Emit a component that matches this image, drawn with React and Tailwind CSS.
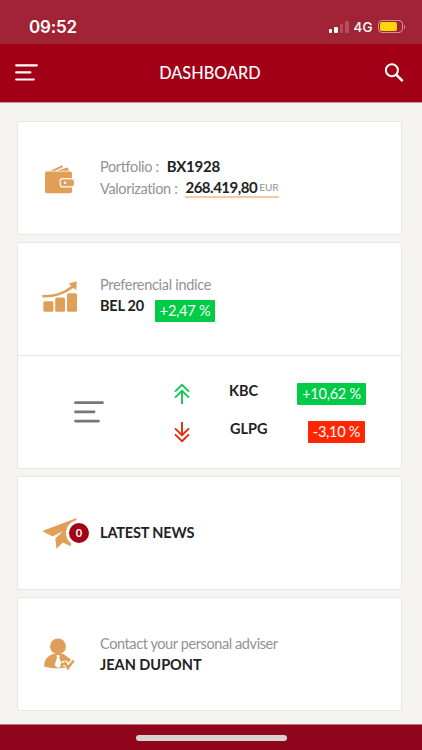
const fontFamily = "font-['Lato','Open_Sans',sans-serif]";

function MenuIcon({ className }) {
  return (
    <svg viewBox="0 0 30 22" className={className} stroke="currentColor" strokeWidth="2.8" strokeLinecap="round">
      <path d="M1.5 1.7H28.5M1.5 10.9H20M1.5 20.1H24.5" />
    </svg>
  );
}

function SearchIcon() {
  return (
    <svg viewBox="0 0 20 20" className="h-5 w-5" fill="none" stroke="white">
      <circle cx="7.9" cy="7.3" r="6" strokeWidth="2" />
      <path d="M12.2 11.6L18.7 18.1" strokeWidth="2.5" />
    </svg>
  );
}

function WalletIcon() {
  return (
    <svg viewBox="0 0 36 36" className="mb-[2px] h-9 w-9" fill="#e09f58">
      <path d="M8.5 11.7L19.6 6.4Q20.4 6.1 20.8 6.9L21 7.9L13 11.7Z" />
      <path d="M15 11.8L25 8.5Q25.8 8.3 26.1 9.1L26.8 11.8Z" />
      <rect x="3" y="12.6" width="27" height="21.6" rx="1.8" />
      <rect x="18.2" y="19.6" width="14.2" height="8.3" rx="2.5" stroke="white" strokeWidth="1.2" />
      <circle cx="23" cy="23.7" r="1.2" fill="white" />
    </svg>
  );
}

function ChartIcon() {
  return (
    <svg viewBox="0 0 36 36" className="mb-[6px] h-9 w-9" fill="#e09f58">
      <rect x="1.4" y="23.2" width="10" height="10.6" rx="1.6" />
      <rect x="13.2" y="19.4" width="9.8" height="14.4" rx="1.6" />
      <rect x="25" y="15.2" width="10" height="18.6" rx="1.6" />
      <path d="M0.4 16.8Q17 18.1 29.4 7.8L26.7 5.4L34.7 3.2L34.3 12.1L31.2 9.9Q18 20 0.4 19.4Z" />
    </svg>
  );
}

function PlaneIcon() {
  return (
    <svg viewBox="0 0 36 36" className="h-9 w-9" fill="#e09f58">
      <path d="M0.2 15.9L34.8 2.9L28.6 31.2L20.8 27.6L14.4 33.8L13.4 23.4L20.8 16.2L10.6 21.6Z" />
    </svg>
  );
}

function AdviserIcon() {
  return (
    <svg viewBox="0 0 36 36" className="mb-[2px] h-9 w-9" fill="#e09f58">
      <ellipse cx="16" cy="11.4" rx="7.9" ry="8" />
      <path d="M10.5 19H21.5L29 24.5V31Q23 33.4 16 33.4Q9 33.4 2 31.5Q2 22.5 10.5 19Z" />
      <path d="M14.6 20H17.6L17.3 22.7L19.8 30L16.2 33.6L12.6 30L15 22.7Z" fill="white" />
      <path d="M20 29L23.5 28.2L26.2 32L31.8 25" fill="none" stroke="white" strokeWidth="5" />
      <path d="M18.8 30.4L23.2 28L26 33L31.6 25.4" fill="none" stroke="#e09f58" strokeWidth="2.6" />
    </svg>
  );
}

function TrendIcon({ className }) {
  return (
    <svg viewBox="0 0 16 22" className={className} fill="none" stroke="currentColor" strokeWidth="1.9">
      <path d="M1 8.6L8 1.8L15 8.6M1 14.6L8 7.8L15 14.6M8 7.8V21" />
    </svg>
  );
}

function StatusBar() {
  return (
    <div className="flex h-11 items-center justify-between bg-[#a02435] pt-[9px] pr-[17px] pl-[29px] text-white">
      <span className="font-['Inter',sans-serif] text-[17px] leading-5 font-semibold tracking-[-0.2px]">09:52</span>
      <div className="flex items-center">
        <div className="mr-[5px] flex h-3 items-end gap-[2px]">
          <span className="h-1 w-[3.5px] rounded-[1px] bg-white" />
          <span className="h-[6px] w-[3.5px] rounded-[1px] bg-white" />
          <span className="h-[9px] w-[3.5px] rounded-[1px] bg-white/20" />
          <span className="h-3 w-[3.5px] rounded-[1px] bg-white/20" />
        </div>
        <span className="mr-[5px] font-['Inter',sans-serif] text-[13.5px] leading-4 font-medium">4G</span>
        <div className="h-[13px] w-[25px] rounded-[4px] border border-white/50 p-[1px]">
          <div className="h-full w-[17px] rounded-[2px] bg-[#ffd60a]" />
        </div>
        <span className="ml-[1px] h-1 w-[1.5px] rounded-r bg-white/50" />
      </div>
    </div>
  );
}

function Card({ children, className = '' }) {
  return (
    <section className={`rounded-[2px] border border-[#e7e6e0] bg-white ${className}`}>{children}</section>
  );
}

function Rate({ children, className }) {
  return (
    <span className={`flex h-[22px] items-center justify-center rounded-[1px] text-[14.5px] tracking-[-0.25px] text-white ${className}`}>
      {children}
    </span>
  );
}

export default function App() {
  return (
    <div className={`flex h-[750px] w-[422px] flex-col overflow-hidden bg-[#f5f4f0] text-[#222] [font-variant-ligatures:none] ${fontFamily}`}>
      <StatusBar />
      <header className="flex h-[58px] items-center justify-between bg-[#a20016] pr-[18px] pb-px pl-[15px] text-white">
        <MenuIcon className="h-[17px] w-[23px]" />
        <h1 className="mr-[2px] text-[16.3px] leading-5 font-medium">DASHBOARD</h1>
        <SearchIcon />
      </header>

      <main className="flex flex-1 flex-col gap-[7px] border-t border-[#dc8e99] pt-[18px] pr-5 pl-[17px]">
        <Card className="flex h-[114px] items-center pl-6">
          <WalletIcon />
          <div className="ml-[22px] text-[14.5px] leading-[22px] tracking-[-0.35px] text-[#929292]">
            <p className="flex h-[22px]">
              <span>Portfolio :</span>
              <b className="-mt-px ml-2 text-[15px] tracking-[-0.2px] text-[#222]">BX1928</b>
            </p>
            <p className="flex h-[22px]">
              <span>Valorization :</span>
              <span className="ml-2 flex h-[20px] items-center border-b-2 border-[#f3caa5]">
                <b className="text-[15px] tracking-[-0.5px] text-[#222]">268.419,80</b>
                <span className="ml-[2px] text-[10px] tracking-normal">EUR</span>
              </span>
            </p>
          </div>
        </Card>

        <Card className="h-[227px]">
          <div className="flex h-[113px] items-center border-b border-[#e7e6e0] pl-6">
            <ChartIcon />
            <div className="mb-[8px] ml-[22px] text-[14.5px] leading-[21px] tracking-[-0.3px]">
              <p className="text-[#929292]">Preferencial indice</p>
              <div className="flex h-[22px]">
                <b className="w-[45px] tracking-[-0.25px]">BEL 20</b>
                <Rate className="mt-[5px] ml-[10px] w-[60px] bg-[#00cb46]">+2,47 %</Rate>
              </div>
            </div>
          </div>
          <div className="flex h-[112px] items-center">
            <MenuIcon className="ml-14 h-[22px] w-[30px] text-[#777]" />
            <div className="mt-px ml-[70px] flex flex-col gap-[15px]">
              <div className="flex h-[23px] items-center">
                <TrendIcon className="h-[22px] w-4 text-[#16c653]" />
                <b className="w-[107px] pb-[5px] pl-[39px] text-[14.5px] leading-5">KBC</b>
                <Rate className="w-[69px] bg-[#00cb46]">+10,62 %</Rate>
              </div>
              <div className="flex h-[23px] items-center">
                <TrendIcon className="h-[22px] w-4 rotate-180 text-[#e52808]" />
                <b className="w-[118px] pb-[5px] pl-10 text-[14.5px] leading-5">GLPG</b>
                <Rate className="w-[57px] bg-[#ff2600]">-3,10 %</Rate>
              </div>
            </div>
          </div>
        </Card>

        <Card className="flex h-[114px] items-center pl-6">
          <div className="relative">
            <PlaneIcon />
            <span className="absolute top-[5px] left-[24px] flex h-[26px] w-[26px] items-center justify-center rounded-full border-[3px] border-white bg-[#a20016] text-[11px] font-bold text-white">
              0
            </span>
          </div>
          <b className="ml-[22px] text-[14.5px] leading-5 tracking-[-0.15px]">LATEST NEWS</b>
        </Card>

        <Card className="flex h-[114px] items-center pl-6">
          <AdviserIcon />
          <div className="mb-px ml-[22px] text-[14.5px] leading-[21px] tracking-[-0.4px]">
            <p className="text-[#929292]">Contact your personal adviser</p>
            <b className="tracking-normal">JEAN DUPONT</b>
          </div>
        </Card>
      </main>

      <footer className="flex h-[26px] justify-center border-t border-[#c96b79] bg-[#90061d] pt-[10px]">
        <div className="h-[6px] w-[151px] rounded-full bg-[#d8d2d3]" />
      </footer>
    </div>
  );
}
